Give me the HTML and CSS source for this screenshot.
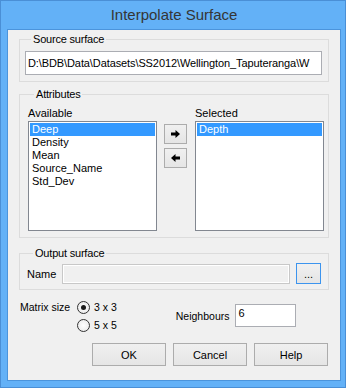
FILE: index.html
```html
<!DOCTYPE html>
<html lang="en">
<head>
  <meta charset="UTF-8">
  <meta name="viewport" content="width=device-width, initial-scale=1.0">
  <title>Interpolate Surface</title>
  <link rel="stylesheet" href="styles.css">
</head>
<body>
  <div class="window">
    <div class="titlebar">Interpolate Surface</div>
    <div class="panel">
      <fieldset class="group source">
        <legend>Source surface</legend>
        <div class="field">D:\BDB\Data\Datasets\SS2012\Wellington_Taputeranga\W</div>
      </fieldset>

      <fieldset class="group attributes">
        <legend>Attributes</legend>
        <div class="lists">
          <div class="list-col">
            <div class="label">Available</div>
            <ul class="listbox">
              <li class="selected">Deep</li>
              <li>Density</li>
              <li>Mean</li>
              <li>Source_Name</li>
              <li>Std_Dev</li>
            </ul>
          </div>
          <div class="move-buttons">
            <button class="btn move">
              <svg width="9" height="8" viewBox="0 0 9 8"><path d="M0 2.5H4.5V0L9 4L4.5 8V5.5H0Z" fill="#000"/></svg>
            </button>
            <button class="btn move">
              <svg width="9" height="8" viewBox="0 0 9 8"><path d="M9 2.5H4.5V0L0 4L4.5 8V5.5H9Z" fill="#000"/></svg>
            </button>
          </div>
          <div class="list-col">
            <div class="label">Selected</div>
            <ul class="listbox">
              <li class="selected">Depth</li>
            </ul>
          </div>
        </div>
      </fieldset>

      <fieldset class="group output">
        <legend>Output surface</legend>
        <div class="name-row">
          <span class="name-label">Name</span>
          <div class="field disabled"></div>
          <button class="btn browse">...</button>
        </div>
      </fieldset>

      <div class="options">
        <div class="matrix">
          <span class="opt-label">Matrix size</span>
          <div class="radios">
            <label class="radio"><span class="dot checked"></span>3 x 3</label>
            <label class="radio"><span class="dot"></span>5 x 5</label>
          </div>
        </div>
        <div class="neighbours">
          <span class="opt-label">Neighbours</span>
          <div class="field num">6</div>
        </div>
      </div>

      <div class="actions">
        <button class="btn action">OK</button>
        <button class="btn action">Cancel</button>
        <button class="btn action">Help</button>
      </div>
    </div>
  </div>
</body>
</html>
```

FILE: styles.css
```css
body {
  margin: 0;
  font-family: "Liberation Sans", Arial, sans-serif;
  font-size: 11px;
  color: #000;
}

.window {
  width: 346px;
  height: 388px;
  box-sizing: border-box;
  background-color: #63b1f7;
  border: 1px solid #4a8fd6;
  padding: 0 4px 6px 6px;
}

.titlebar {
  height: 28px;
  line-height: 28px;
  text-align: center;
  font-size: 15px;
  color: #353535;
}

.panel {
  height: 352px;
  box-sizing: border-box;
  background-color: #f0f0f0;
  border: 1px solid #4b94dc;
  padding: 0 11px;
}

/* group boxes */
.group {
  margin: 0;
  min-width: 0;
  border: 1px solid #dcdcdc;
}

.group legend {
  margin-left: 6px;
  padding: 0 2px;
  line-height: 14px;
  letter-spacing: -0.2px;
}

.source {
  margin-top: 2px;
  padding: 5px 6px 6px 5px;
}

.attributes {
  margin-top: 5px;
  padding: 5px 4px 6px 8px;
}

.output {
  margin-top: 8px;
  padding: 3px 7px 5px 7px;
}

.field {
  box-sizing: border-box;
  height: 24px;
  line-height: 22px;
  padding: 0 2px;
  background-color: #fff;
  border: 1px solid #abadb3;
  white-space: nowrap;
  overflow: hidden;
}

.source .field {
  letter-spacing: -0.1px;
}

/* attribute lists */
.lists {
  display: flex;
}

.list-col {
  width: 129px;
}

.label {
  line-height: 15px;
}

.listbox {
  list-style: none;
  margin: 0;
  padding: 1px;
  height: 110px;
  box-sizing: border-box;
  background-color: #fff;
  border: 1px solid #828790;
}

.listbox li {
  height: 13px;
  line-height: 13px;
  padding-left: 2px;
}

.listbox li.selected {
  background-color: #3399ff;
  color: #fff;
}

.move-buttons {
  display: flex;
  flex-direction: column;
  gap: 4px;
  width: 23px;
  margin: 18px 8px 0 7px;
}

/* buttons */
.btn {
  box-sizing: border-box;
  padding: 0;
  font-family: inherit;
  font-size: 11px;
  color: #000;
  border: 1px solid #acacac;
  background: linear-gradient(#f0f0f0, #e5e5e5);
}

.move {
  height: 20px;
  display: flex;
  align-items: center;
  justify-content: center;
}

.name-row {
  display: flex;
  align-items: center;
  height: 21px;
}

.name-label {
  width: 35px;
}

.field.disabled {
  width: 228px;
  height: 20px;
  background-color: #f0f0f0;
  border-color: #c8c8c8;
  box-shadow: inset 0 0 0 1px #fff;
}

.browse {
  width: 25px;
  height: 21px;
  margin-left: 6px;
  border-color: #3c94ee;
  line-height: 12px;
}

/* matrix size and neighbours */
.options {
  display: flex;
  margin: 8px 0 0 1px;
  height: 36px;
}

.opt-label {
  font-size: 10.5px;
}

.matrix {
  display: flex;
  gap: 4px;
}

.matrix .opt-label {
  width: 53px;
  line-height: 18px;
}

.radios {
  display: flex;
  flex-direction: column;
}

.radio {
  display: flex;
  align-items: center;
  gap: 4px;
  height: 18px;
  font-size: 10.5px;
}

.dot {
  width: 13px;
  height: 13px;
  box-sizing: border-box;
  border: 1px solid #333;
  border-radius: 50%;
  background: radial-gradient(#fff, #e6e6e6);
  display: flex;
  align-items: center;
  justify-content: center;
}

.dot.checked::after {
  content: "";
  width: 5px;
  height: 5px;
  border-radius: 50%;
  background-color: #1a1a1a;
}

.neighbours {
  display: flex;
  align-items: center;
  gap: 6px;
  margin: 6px 0 0 59px;
  height: 23px;
}

.field.num {
  width: 61px;
  height: 23px;
  line-height: 16px;
}

/* dialog buttons */
.actions {
  display: flex;
  justify-content: flex-end;
  gap: 7px;
  margin: 9px 1px 0 0;
}

.action {
  width: 74px;
  height: 23px;
}
```
